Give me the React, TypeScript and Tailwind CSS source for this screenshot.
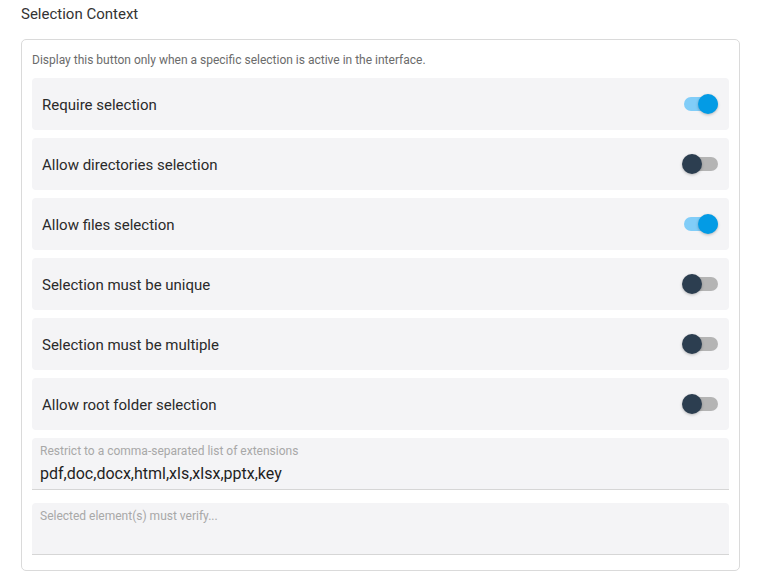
import React from "react";

function Toggle({ on }: { on: boolean }) {
  return (
    <div className="relative w-[34px] h-[20px] flex items-center">
      <div className={"w-[34px] h-[14px] rounded-full " + (on ? "bg-[#81cdf8]" : "bg-[#b4b4b4]")} />
      <div
        className={
          "absolute top-0 w-[20px] h-[20px] rounded-full shadow-[0_1px_3px_rgba(0,0,0,0.25)] " +
          (on ? "left-[14px] bg-[#039be5]" : "left-[-2px] bg-[#2c3e50]")
        }
      />
    </div>
  );
}

const rows: [string, boolean][] = [
  ["Require selection", true],
  ["Allow directories selection", false],
  ["Allow files selection", true],
  ["Selection must be unique", false],
  ["Selection must be multiple", false],
  ["Allow root folder selection", false],
];

export default function App() {
  return (
    <div className="w-[762px] h-[580px] bg-white font-['Roboto',sans-serif] text-[#212121]">
      <div className="pl-[21px] pr-[22px]">
        <div className="h-[28px] pt-[5px] text-[15px] leading-[18px] text-[#333]">Selection Context</div>
        <div className="mt-[11px] border border-[#dadada] rounded-[5px] px-[10px] pt-[13px] pb-[15px]">
          <div className="text-[12px] leading-[14px] text-[#6b6b6b] mb-[11px]">
            Display this button only when a specific selection is active in the interface.
          </div>
          <div className="flex flex-col gap-[8px]">
            {rows.map(([label, on]) => (
              <div key={label} className="h-[52px] bg-[#f4f4f6] rounded-[4px] flex items-center justify-between pl-[10px] pr-[11px]">
                <span className="text-[15px] leading-[20px] pt-[1px] text-[#2a2a2a]">{label}</span>
                <Toggle on={on} />
              </div>
            ))}
            <div className="h-[52px] bg-[#f4f4f6] rounded-t-[4px] border-b border-[#d6d6d6] px-[8px] pt-[7px]">
              <div className="text-[12px] leading-[13px] text-[#a8a8a8]">Restrict to a comma-separated list of extensions</div>
              <div className="text-[16px] leading-[22px] mt-[5px] text-[#1f1f1f]">pdf,doc,docx,html,xls,xlsx,pptx,key</div>
            </div>
            <div className="mt-[5px] h-[52px] bg-[#f4f4f6] rounded-t-[4px] border-b border-[#d6d6d6] px-[8px] pt-[7px]">
              <div className="text-[12px] leading-[13px] text-[#a8a8a8]">Selected element(s) must verify...</div>
            </div>
          </div>
        </div>
      </div>
    </div>
  );
}
